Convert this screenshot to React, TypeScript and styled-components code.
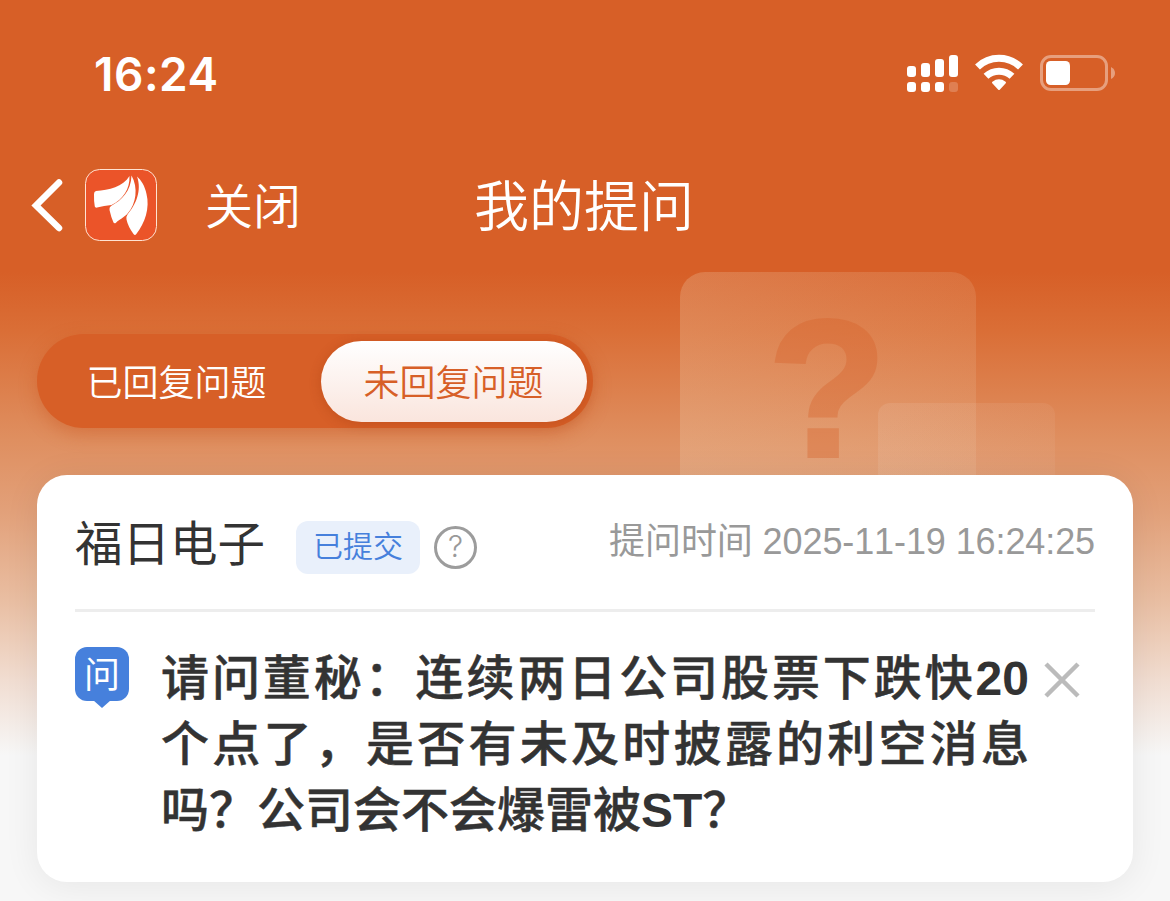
import React from 'react';
import styled, { createGlobalStyle } from 'styled-components';

const GlobalStyle = createGlobalStyle`
  * {
    box-sizing: border-box;
  }

  body {
    margin: 0;
    background: #f7f7f7;
    font-family: 'Liberation Sans', 'Noto Sans CJK SC', sans-serif;
  }

  p, h1, h2 {
    margin: 0;
    font-weight: normal;
  }
`;

const Page = styled.div`
  position: relative;
  width: 1170px;
  height: 901px;
  overflow: hidden;
  background: linear-gradient(
    #d75f27 0,
    #d75f27 272px,
    #da6e36 330px,
    #df8f60 440px,
    #e2a079 510px,
    #e9bea2 600px,
    #f1ddd1 680px,
    #f7f7f7 755px
  );
`;

const StatusBar = styled.header`
  display: flex;
  justify-content: space-between;
  align-items: center;
  height: 148px;
  padding: 0 54px 0 94px;
  color: #fff;
`;

const Clock = styled.span`
  font-family: Inter, sans-serif;
  font-size: 46px;
  font-weight: 600;
  line-height: 56px;
  letter-spacing: 0.5px;
`;

const StatusIcons = styled.svg`
  display: block;
`;

const NavBar = styled.nav`
  display: grid;
  grid-template-columns: 85px 120px 269px 1fr;
  align-items: center;
  height: 114px;
  color: #fff;
`;

const BackIcon = styled.svg`
  display: block;
  margin-left: 30px;
`;

const Logo = styled.svg`
  display: block;
`;

const Close = styled.span`
  padding-bottom: 5px;
  font-family: 'Noto Sans CJK SC', sans-serif;
  font-size: 48px;
  font-weight: 350;
  line-height: 60px;
`;

const Title = styled.h1`
  padding-bottom: 6px;
  font-family: 'Noto Sans CJK SC', sans-serif;
  font-size: 55px;
  font-weight: 350;
  line-height: 70px;
`;

const Watermark = styled.div<{ size: 'large' | 'small' }>`
  position: absolute;
  left: ${(p) => (p.size === 'large' ? 680 : 878)}px;
  top: ${(p) => (p.size === 'large' ? 272 : 403)}px;
  width: ${(p) => (p.size === 'large' ? 296 : 177)}px;
  height: ${(p) => (p.size === 'large' ? 240 : 110)}px;
  border-radius: ${(p) => (p.size === 'large' ? 25 : 12)}px;
  background: ${(p) =>
    p.size === 'large'
      ? 'linear-gradient(90deg, rgba(238, 210, 180, 0.25), rgba(238, 210, 180, 0.15))'
      : 'linear-gradient(90deg, rgba(238, 215, 200, 0.14), rgba(238, 215, 200, 0.08))'};
`;

const WatermarkSign = styled.span`
  display: block;
  padding-left: 88px;
  color: #d75f27;
  font-size: 194px;
  font-weight: bold;
  line-height: 234px;
  opacity: 0.35;
  -webkit-text-stroke: 4px #d75f27;
`;

const Tabs = styled.div`
  position: relative;
  display: flex;
  width: 556px;
  height: 94px;
  margin: 72px 0 0 37px;
  padding: 7px 6px 6px 8px;
  border-radius: 47px;
  background: #d75f27;
  box-shadow: 0 6px 18px rgba(200, 80, 25, 0.4);
`;

const Tab = styled.button<{ active?: boolean }>`
  flex: ${(p) => (p.active ? '0 0 266px' : '1')};
  padding: ${(p) => (p.active ? '0 1px 3px 0' : '0 13px 3px 0')};
  border: 0;
  border-radius: 41px;
  background: ${(p) => (p.active ? 'linear-gradient(#fff, #fae5dd)' : 'none')};
  box-shadow: ${(p) => (p.active ? '0 2px 12px rgba(150, 50, 10, 0.3)' : 'none')};
  color: ${(p) => (p.active ? '#d75f27' : '#fff')};
  font-family: 'Noto Sans CJK SC', sans-serif;
  font-size: 36px;
  font-weight: 350;
`;

const Card = styled.main`
  position: relative;
  width: 1096px;
  height: 407px;
  margin: 47px 0 0 37px;
  padding: 0 38px;
  border-radius: 30px;
  background: #fff;
  box-shadow: 0 4px 36px rgba(0, 0, 0, 0.07);
`;

const CardHeader = styled.div`
  display: flex;
  height: 137px;
  border-bottom: 3px solid #ededed;
`;

const Company = styled.h2`
  width: 221px;
  padding-top: 36px;
  color: #333;
  font-size: 47.5px;
  line-height: 68px;
`;

const Badge = styled.span`
  width: 124px;
  height: 53px;
  margin-top: 46px;
  border-radius: 12px;
  background: #e9f0fb;
  color: #4680dc;
  font-family: 'Noto Sans CJK SC', sans-serif;
  font-size: 30px;
  font-weight: 350;
  line-height: 47px;
  text-align: center;
`;

const Help = styled.span`
  width: 43px;
  height: 43px;
  margin: 51px 0 0 14px;
  border: 3px solid #9c9c9c;
  border-radius: 50%;
  color: #999;
  font-family: Inter, sans-serif;
  font-size: 30px;
  font-weight: 300;
  line-height: 35px;
  text-align: center;
`;

const AskTime = styled.span`
  margin: 43px 0 0 auto;
  color: #999;
  font-size: 36px;
  font-kerning: none;
  letter-spacing: -0.1px;
  line-height: 48px;
`;

const Question = styled.div`
  display: flex;
  align-items: flex-start;
  padding-top: 33px;
`;

const AskMark = styled.span`
  position: relative;
  flex: 0 0 54px;
  height: 54px;
  margin: 2px 32px 0 0;
  border-radius: 12px;
  background: #4680dc;
  color: #fff;
  font-size: 36px;
  line-height: 57px;
  text-align: center;

  &::after {
    content: '';
    position: absolute;
    left: 18px;
    top: 53px;
    border: 9px solid transparent;
    border-top: 8px solid #4680dc;
    border-bottom: 0;
  }
`;

const QuestionText = styled.p`
  width: 868px;
  padding-top: 1px;
  color: #333;
  font-size: 48px;
  font-weight: 500;
  line-height: 66px;
  -webkit-text-stroke: 0.5px #333;
`;

const Latin = styled.span`
  font-weight: bold;
  -webkit-text-stroke: 0;
`;

const Line = styled.span<{ last?: boolean }>`
  display: block;
  white-space: nowrap;
  text-align: left;
  text-align-last: ${(p) => (p.last ? 'left' : 'justify')};
`;

const Dismiss = styled.svg`
  display: block;
  margin: 16px 0 0 14px;
`;

const signalBars = [
  { x: 0, y: 11, height: 11 },
  { x: 14, y: 8, height: 14 },
  { x: 28, y: 4, height: 18 },
  { x: 42, y: 0, height: 22 },
];

const PhoneStatus = () => (
  <StatusIcons width="209" height="40" viewBox="0 0 209 40" fill="#fff">
    {signalBars.map((bar) => (
      <g key={bar.x}>
        <rect x={bar.x} y={bar.y + 1} width="9" height={bar.height} rx="3" />
        <rect
          x={bar.x}
          y="28"
          width="9"
          height="10"
          rx="3"
          opacity={bar.x === 42 ? 0.2 : 1}
        />
      </g>
    ))}
    <g fill="none" stroke="#fff" strokeWidth="7">
      <path d="M70.500 13a31 31 0 0 1 43 0" />
      <path d="M79 22.300a19 19 0 0 1 26 0" />
    </g>
    <path
      d="M92 35l-6-6.500q6-4.500 12 0z"
      stroke="#fff"
      strokeWidth="2"
      strokeLinejoin="round"
    />
    <rect
      x="134.500"
      y="2.500"
      width="65"
      height="33"
      rx="9.500"
      fill="none"
      stroke="#fff"
      strokeOpacity="0.4"
      strokeWidth="3"
    />
    <rect x="139" y="7" width="24" height="24" rx="4.500" />
    <path d="M204 13q4 2 4 6t-4 6z" opacity="0.4" />
  </StatusIcons>
);

const App = () => (
  <>
    <GlobalStyle />
    <Page>
      <Watermark size="large">
        <WatermarkSign>?</WatermarkSign>
      </Watermark>
      <Watermark size="small" />

      <StatusBar>
        <Clock>16:24</Clock>
        <PhoneStatus />
      </StatusBar>

      <NavBar>
        <BackIcon width="34" height="56" viewBox="0 0 34 56">
          <path
            d="M29 5.500 6 28.500l23 22.500"
            fill="none"
            stroke="#fff"
            strokeWidth="6.500"
            strokeLinecap="round"
            strokeLinejoin="miter"
          />
        </BackIcon>
        <Logo width="72" height="72" viewBox="0 0 72 72">
          <rect
            x="0.500"
            y="0.500"
            width="71"
            height="71"
            rx="14"
            fill="#eb5429"
            stroke="#ffe3d2"
          />
          <g fill="#fff">
            <path d="M44.500 7C38 18 24 21 11 22q-2 .3-2 3-.2 7 .8 12.500 .5 1.500 2.200 1 7-1.700 14.500-2.500C38 30.500 45 20 44.500 7z" />
            <path d="M46.500 6.500C46 22 37 31 26 37q-2 1.500-1.500 4 1.500 7 4 12.500 .8 1.500 2.500.3c3-3.500 8-5 12-9.800 8-9.500 10.500-25 3.500-37.500z" />
            <path d="M52 7.500c5 14-1 28-9.500 38q-1.500 2-1 5 1.500 7 7 14.500 1.500 1.800 2.800 0C60 54 65 39 61.500 25 60 17 56 11 52 7.500z" />
          </g>
        </Logo>
        <Close>关闭</Close>
        <Title>我的提问</Title>
      </NavBar>

      <Tabs>
        <Tab>已回复问题</Tab>
        <Tab active>未回复问题</Tab>
      </Tabs>

      <Card>
        <CardHeader>
          <Company>福日电子</Company>
          <Badge>已提交</Badge>
          <Help>?</Help>
          <AskTime>提问时间 2025-11-19 16:24:25</AskTime>
        </CardHeader>

        <Question>
          <AskMark>问</AskMark>
          <QuestionText>
            <Line>
              请问董秘：连续两日公司股票下跌快<Latin>20</Latin>
            </Line>
            <Line>个点了，是否有未及时披露的利空消息</Line>
            <Line last>
              吗？公司会不会爆雷被<Latin>ST</Latin>？
            </Line>
          </QuestionText>
          <Dismiss width="38" height="38" viewBox="0 0 38 38">
            <path d="M3 3l32 32M35 3 3 35" fill="none" stroke="#bbb" strokeWidth="4.500" />
          </Dismiss>
        </Question>
      </Card>
    </Page>
  </>
);

export default App;
